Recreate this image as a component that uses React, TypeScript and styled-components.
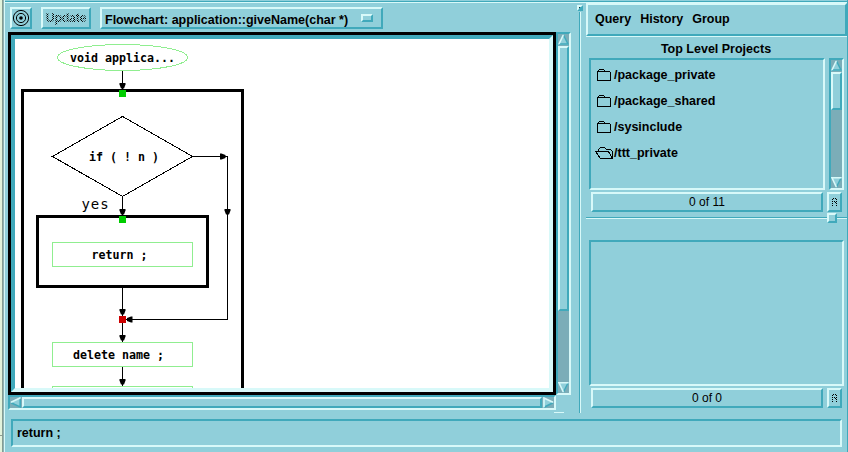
import React from 'react';
import styled, { createGlobalStyle } from 'styled-components';

const c = {
  face: '#90cfda',
  light: '#d8f9f9',
  dark: '#40a9bb',
  trough: '#7badb8',
};

const Global = createGlobalStyle`
  * { box-sizing: border-box; }
  body { margin: 0; background: ${c.face}; overflow: hidden; }
`;

const Screen = styled.div`
  display: flex;
  width: 848px;
  height: 452px;
  background: ${c.face};
  color: #000;
  font: bold 12.5px/16px 'Liberation Sans', Arial, sans-serif;
  white-space: nowrap;
`;

const DesktopEdge = styled.div`
  flex: none;
  width: 5px;
  border-right: 1px solid ${c.light};
  background: linear-gradient(#8f9b90, #8f9b90) 0 435px / 2px 1px no-repeat,
    linear-gradient(90deg, #e2f3dc 2px, #849c94 2px, #849c94 3px, #8fb3b3 3px);
`;

const Window = styled.div`
  display: flex;
  flex-direction: column;
  flex: 1;
  min-width: 0;
  border-right: 1px solid ${c.dark};
`;

const TopRule = styled.div`
  height: 3px;
  background: linear-gradient(${c.face} 1px, ${c.dark} 1px, ${c.dark} 2px, ${c.light} 2px);
`;

const Panes = styled.div`
  display: flex;
  height: 416px;
`;

const bevel = (sunken?: boolean) =>
  sunken
    ? `border-color: ${c.dark} ${c.light} ${c.light} ${c.dark};`
    : `border-color: ${c.light} ${c.dark} ${c.dark} ${c.light};`;

const FlowPane = styled.section`
  width: 574px;
  padding: 4px 0 0 3px;
`;

const Toolbar = styled.div`
  display: flex;
  gap: 9px;
  height: 22px;
  margin: 0 0 3px 2px;
`;

const Button = styled.button<{ $w: number; $h?: number }>`
  display: flex;
  align-items: center;
  justify-content: center;
  width: ${(p) => p.$w}px;
  height: ${(p) => p.$h ?? 22}px;
  padding: 0;
  border: 2px solid;
  ${bevel()}
  background: ${c.face};
  color: inherit;
  font: inherit;
`;

const StippledText = styled.span`
  background: repeating-conic-gradient(#000 0 25%, transparent 0 50%) 0 0 / 2px 2px;
  background-clip: text;
  -webkit-background-clip: text;
  color: transparent;
  font-weight: bold;
  letter-spacing: -0.3px;
`;

const FunctionMenu = styled(Button)`
  justify-content: flex-start;
  padding: 3px 0 0 3px;
`;

const MenuMark = styled.span`
  width: 12px;
  height: 8px;
  margin: -4px 0 0 13px;
  border: 2px solid;
  ${bevel()}
`;

const Editor = styled.div`
  display: grid;
  grid-template: 363px 15px / 548px 15px;
`;

const CanvasFrame = styled.div`
  border: 3px solid #000;
`;

const Canvas = styled.div`
  width: 542px;
  height: 357px;
  border: 4px solid;
  ${bevel(true)}
  background: #fff;
`;

const Chart = styled.svg`
  display: block;
  font: bold 11.63px 'DejaVu Sans Mono', 'Liberation Mono', monospace;
`;

const Track = styled.div<{ $across?: boolean }>`
  display: flex;
  flex-direction: ${(p) => (p.$across ? 'row' : 'column')};
  justify-content: space-between;
  width: ${(p) => (p.$across ? 'auto' : '15px')};
  border: 2px solid;
  ${bevel(true)}
  background: ${c.trough};
`;

const Thumb = styled.div<{ $size: number; $across?: boolean }>`
  ${(p) => (p.$across ? `width: ${p.$size}px; margin: 0 1px;` : `height: ${p.$size}px; margin: 1px 0 auto;`)}
  border: 2px solid;
  ${bevel()}
  background: ${c.face};
`;

const Arrow = styled.svg`
  display: block;
  flex: none;
`;

const Sash = styled.div`
  position: relative;
  width: 2px;
  height: 401px;
  margin: 9px 5px 0 0;
  border-left: 1px solid ${c.dark};
  border-right: 1px solid ${c.light};
`;

const SashKnob = styled.span`
  position: absolute;
  top: -7px;
  left: -3px;
  width: 6px;
  height: 6px;
  border: 2px solid;
  ${bevel()}
  background: linear-gradient(135deg, #103038 50%, ${c.dark} 50%);
`;

const SashFoot = styled.span`
  position: absolute;
  left: -26px;
  bottom: 0;
  width: 10px;
  height: 1px;
  background: ${c.light};
`;

const ProjectPane = styled.section`
  width: 261px;
`;

const MenuBar = styled.nav`
  display: flex;
  gap: 9px;
  height: 33px;
  padding: 6px 0 0 7px;
  border: 2px solid;
  ${bevel()}
`;

const PaneTitle = styled.div`
  height: 22px;
  padding: 4px 1px 0 0;
  border-top: 1px solid ${c.light};
  text-align: center;
`;

const ListRow = styled.div`
  display: flex;
  gap: 4px;
  padding-left: 3px;
`;

const List = styled.div<{ $w: number; $h: number }>`
  width: ${(p) => p.$w}px;
  height: ${(p) => p.$h}px;
  padding: 2px 0 0 4px;
  border: 2px solid;
  ${bevel(true)}
`;

const Project = styled.div`
  display: flex;
  align-items: center;
  height: 26px;
`;

const StatusRow = styled.div`
  display: flex;
  gap: 4px;
  padding: 2px 0 0 5px;
  font-weight: normal;
  font-size: 12px;
`;

const SplitRule = styled.div`
  position: relative;
  height: 2px;
  margin: 5px 0 21px;
  border-top: 1px solid ${c.dark};
  border-bottom: 1px solid ${c.light};
`;

const SplitKnob = styled.span`
  position: absolute;
  top: -5px;
  right: 10px;
  width: 10px;
  height: 10px;
  border: 2px solid;
  ${bevel()}
  background: ${c.face};
`;

const StatementField = styled.div`
  width: 831px;
  height: 28px;
  margin-left: 6px;
  padding: 4px;
  border: 2px solid;
  ${bevel(true)}
`;

const arrows = {
  up: { body: 'M5.5 0L11 11H0Z', shade: 'M5.5 1L10 10H1', shine: 'M5.3 1L1 10' },
  down: { body: 'M0 0H11L5.5 11Z', shade: 'M10 1L5.5 10', shine: 'M10.5 .8H1L5.3 10' },
  left: { body: 'M0 5.5L11 0V11Z', shade: 'M10.2 1V10L1 5.8', shine: 'M1 5.3L10.5 .8' },
  right: { body: 'M0 0L11 5.5L0 11Z', shade: 'M10 5.7L1 10.2', shine: 'M1 10.2V1L10 5.3' },
};

function ScrollArrow({ dir }: { dir: keyof typeof arrows }) {
  const a = arrows[dir];
  return (
    <Arrow width="11" height="11" viewBox="0 0 11 11" fill="none" strokeWidth="1.6">
      <path d={a.body} fill={c.face} />
      <path d={a.shade} stroke={c.dark} />
      <path d={a.shine} stroke={c.light} />
    </Arrow>
  );
}

function Folder({ open }: { open?: boolean }) {
  return (
    <svg width="19" height="14" viewBox="0 0 19 14" fill="none" stroke="#000" shapeRendering="crispEdges">
      {open ? (
        <path d="M3.5 5.5V3.5L5.5 1.5H9.5L11.5 3.5H15.5L17.5 5.5V12.5H5.5L.5 5.5H13.5L17.5 12.5" />
      ) : (
        <path d="M2.5 3.5H14.5L15.5 4.5V12.5H2.5ZM3.500 3L4.5 1.5H8.5L9.5 3" />
      )}
    </svg>
  );
}

function Target() {
  return (
    <svg width="18" height="18" viewBox="0 0 18 18" fill="none" stroke="#000">
      <circle cx="9" cy="9" r="7.6" />
      <circle cx="9" cy="9" r="4.6" />
      <circle cx="9" cy="9" r="1.8" fill="#000" stroke="none" />
    </svg>
  );
}

const dots = [[1, 0], [3, 0], [0, 1], [4, 1], [0, 3], [2, 3], [4, 3], [0, 5], [4, 5], [0, 7], [4, 7], [3, 4]];

function Stipple() {
  return (
    <svg width="5" height="8" viewBox="0 0 5 8" shapeRendering="crispEdges">
      {dots.map(([x, y]) => (
        <rect key={`${x}-${y}`} x={x} y={y} width="1" height="1" />
      ))}
    </svg>
  );
}

function Head({ x, y, turn = 0 }: { x: number; y: number; turn?: number }) {
  return <path d="M-3 -5.5H3V-4L1.5 0H-1.5L-3 -4Z" transform={`translate(${x} ${y}) rotate(${turn})`} />;
}

function Flowchart() {
  return (
    <Chart width="534" height="349" viewBox="15 39 534 349">
      <g fill="none" stroke="#90ee90" shapeRendering="crispEdges">
        <ellipse cx="122.5" cy="57.5" rx="65" ry="13" />
        <rect x="52.5" y="242.5" width="140" height="24" />
        <rect x="52.5" y="342.5" width="140" height="24" />
        <rect x="52.5" y="386.5" width="140" height="24" />
      </g>
      <g fill="none" stroke="#000" strokeWidth="3" shapeRendering="crispEdges">
        <rect x="22.5" y="90.5" width="220" height="320" />
        <rect x="37.5" y="216.5" width="170" height="70" />
      </g>
      <g fill="none" stroke="#000" shapeRendering="crispEdges">
        <path d="M122.5 71V90M122.5 196V216M122.5 288V316M122.5 323V342M122.5 367V386" />
        <path d="M122.5 116.5L192.5 156.5L122.5 196.5L52.5 156.5Z" />
        <path d="M193 156.5H227.5V319.5H126" />
      </g>
      <Head x={122.5} y={88.5} />
      <Head x={122.5} y={214.5} />
      <Head x={122.5} y={314.5} />
      <Head x={122.5} y={340.5} />
      <Head x={122.5} y={384.5} />
      <Head x={227.5} y={214.5} />
      <Head x={225.5} y={156.5} turn={-90} />
      <Head x={127} y={319.5} turn={90} />
      <path d="M119 90h7v7h-7zM119 216h7v7h-7z" fill="#00cd00" />
      <path d="M119 316h7v7h-7z" fill="#cd0000" />
      <text x="70" y="62">void applica...</text>
      <text x="89" y="161" xmlSpace="preserve">if ( ! n )</text>
      <text x="91.5" y="259">return ;</text>
      <text x="73" y="359">delete name ;</text>
      <text x="81.5" y="209" fontWeight="normal" fontSize="14" letterSpacing="0.9">yes</text>
    </Chart>
  );
}

const projects = [
  { name: '/package_private' },
  { name: '/package_shared' },
  { name: '/sysinclude' },
  { name: '/ttt_private', open: true },
];

export default function App() {
  return (
    <Screen>
      <Global />
      <DesktopEdge />
      <Window>
        <TopRule />
        <Panes>
          <FlowPane>
            <Toolbar>
              <Button $w={22}><Target /></Button>
              <Button $w={50}><StippledText>Update</StippledText></Button>
              <FunctionMenu $w={283}>
                Flowchart: application::giveName(char *)
                <MenuMark />
              </FunctionMenu>
            </Toolbar>
            <Editor>
              <CanvasFrame><Canvas><Flowchart /></Canvas></CanvasFrame>
              <Track>
                <ScrollArrow dir="up" />
                <Thumb $size={265} />
                <ScrollArrow dir="down" />
              </Track>
              <Track $across>
                <ScrollArrow dir="left" />
                <Thumb $size={520} $across />
                <ScrollArrow dir="right" />
              </Track>
            </Editor>
          </FlowPane>
          <Sash><SashKnob /><SashFoot /></Sash>
          <ProjectPane>
            <MenuBar><span>Query</span><span>History</span><span>Group</span></MenuBar>
            <PaneTitle>Top Level Projects</PaneTitle>
            <ListRow>
              <List $w={236} $h={132}>
                {projects.map((p) => (
                  <Project key={p.name}><Folder open={p.open} />{p.name}</Project>
                ))}
              </List>
              <Track>
                <ScrollArrow dir="up" />
                <Thumb $size={38} />
                <ScrollArrow dir="down" />
              </Track>
            </ListRow>
            <StatusRow>
              <Button $w={232} $h={20}>0 of 11</Button>
              <Button $w={15} $h={20}><Stipple /></Button>
            </StatusRow>
            <SplitRule><SplitKnob /></SplitRule>
            <ListRow><List $w={255} $h={146} /></ListRow>
            <StatusRow>
              <Button $w={232} $h={20}>0 of 0</Button>
              <Button $w={15} $h={20}><Stipple /></Button>
            </StatusRow>
          </ProjectPane>
        </Panes>
        <StatementField>return ;</StatementField>
      </Window>
    </Screen>
  );
}
